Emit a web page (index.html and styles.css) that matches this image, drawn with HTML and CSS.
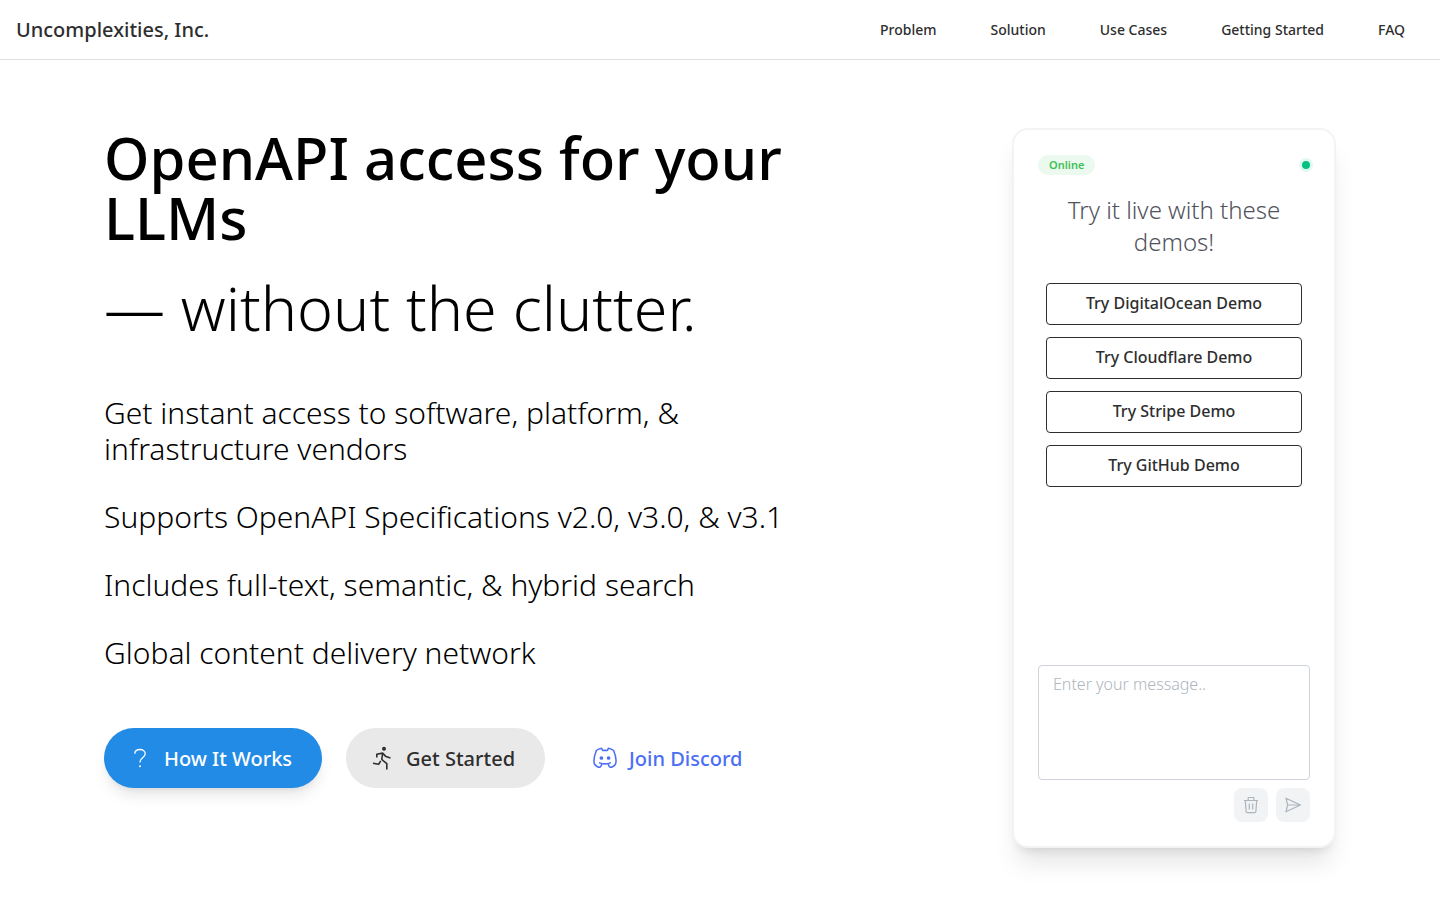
FILE: index.html
```html
<!DOCTYPE html>
<html lang="en">
<head>
<meta charset="utf-8">
<meta name="viewport" content="width=device-width, initial-scale=1">
<title>Uncomplexities, Inc.</title>
<link rel="stylesheet" href="styles.css">
</head>
<body>
<header class="site-header">
  <a class="brand" href="#">Uncomplexities, Inc.</a>
  <nav class="nav" aria-label="Main">
    <a href="#problem">Problem</a>
    <a href="#solution">Solution</a>
    <a href="#use-cases">Use Cases</a>
    <a href="#getting-started">Getting Started</a>
    <a href="#faq">FAQ</a>
  </nav>
</header>
<main class="hero">
  <section class="intro">
    <h1 class="title">OpenAPI access for your LLMs</h1>
    <p class="subtitle">— without the clutter.</p>
    <div class="features">
      <p>Get instant access to software, platform, &amp; infrastructure vendors</p>
      <p>Supports OpenAPI Specifications v2.0, v3.0, &amp; v3.1</p>
      <p>Includes full-text, semantic, &amp; hybrid search</p>
      <p>Global content delivery network</p>
    </div>
    <div class="actions">
      <a class="btn btn-primary" href="#solution">
        <svg class="icon" viewBox="0 0 24 24" aria-hidden="true"><path d="M6.800 7.800C6.800 5.200 9 3.500 12 3.500s5.200 1.800 5.200 4.300c0 3.900-5.200 4-5.200 7.900v.8"/><circle class="dot" cx="12" cy="20.200" r="1"/></svg>
        How It Works
      </a>
      <a class="btn btn-muted" href="#getting-started">
        <svg class="icon icon-run" viewBox="0 0 24 24" aria-hidden="true"><circle class="dot" cx="14" cy="2.700" r="2"/><path d="M3 17.300l5.600 1 2.100-3.400M16.800 23.500v-5.800l-5-4.200.8-6.200M6.800 11.500V8.200l5.800-1.100 3.400 3.500 4.500 1.400"/></svg>
        Get Started
      </a>
      <a class="btn btn-link" href="#discord">
        <svg class="icon icon-discord" viewBox="1 1 22 22" aria-hidden="true"><circle class="dot" cx="8.700" cy="12" r="1.700"/><circle class="dot" cx="15.300" cy="12" r="1.700"/><path d="M15 17.300c0 1 1 3.200 1.700 3.200 1.600 0 3.600-1.100 4.900-2.800 1.200-3.200.5-7.200-1.700-12.600C18.500 3.900 16.900 3.300 15.100 3l-.9 2.200a13 13 0 0 0-4.400 0L8.900 3C7.100 3.300 5.500 3.900 4.100 5.100 1.900 10.500 1.200 14.500 2.400 17.700c1.300 1.700 3.300 2.800 4.900 2.800.7 0 1.700-2.200 1.700-3.200M6.500 16.200c3.700 1.600 7.300 1.600 11 0"/></svg>
        Join Discord
      </a>
    </div>
  </section>
  <section class="card" aria-label="Live demo">
    <div class="status">
      <span class="badge">Online</span>
      <span class="status-dot"></span>
    </div>
    <h2 class="card-title">Try it live with these demos!</h2>
    <div class="demos">
      <button type="button" class="demo">Try DigitalOcean Demo</button>
      <button type="button" class="demo">Try Cloudflare Demo</button>
      <button type="button" class="demo">Try Stripe Demo</button>
      <button type="button" class="demo">Try GitHub Demo</button>
    </div>
    <form class="composer">
      <textarea class="message" aria-label="Message" placeholder="Enter your message.."></textarea>
      <div class="tools">
        <button type="button" class="tool" aria-label="Clear messages">
          <svg class="tool-icon" viewBox="0 0 18 18" aria-hidden="true"><path d="M2 4.500h14M6.200 4.500v-3h5.600v3M3.300 4.500l.8 11c.1.800.5 1.200 1.200 1.200h7.400c.7 0 1.100-.4 1.200-1.200l.8-11M7.300 7.500v6M10.700 7.500v6"/></svg>
        </button>
        <button type="button" class="tool" aria-label="Send message">
          <svg class="tool-icon" viewBox="0 0 18 18" aria-hidden="true"><path d="M1.900 2.200L16.500 9 1.900 15.800 3.700 9zM3.700 9h12.600"/></svg>
        </button>
      </div>
    </form>
  </section>
</main>
</body>
</html>
```
FILE: styles.css
```css
* { box-sizing: border-box; }

body {
  margin: 0;
  background: #fff;
  color: #000;
  font-family: "Noto Sans", "Open Sans", sans-serif;
  font-weight: 300;
}

a { color: inherit; text-decoration: none; }
h1, h2, p { margin: 0; }

svg { fill: none; stroke: currentColor; stroke-linejoin: round; }
.dot { fill: currentColor; stroke: none; }

.site-header {
  display: flex;
  align-items: center;
  justify-content: space-between;
  height: 60px;
  padding: 0 35px 1px 16px;
  border-bottom: 1px solid #dee2e6;
  color: #2e2e2e;
}
.brand { font-size: 20px; font-weight: 500; }
.nav { display: flex; gap: 54px; font-size: 14px; font-weight: 500; }

.hero {
  display: flex;
  justify-content: space-between;
  max-width: 1280px;
  margin: 0 auto;
  padding: 68px 24px 52px;
}
.intro { flex: 0 1 688px; min-width: 0; }
.title { font-size: 58px; font-weight: 500; line-height: 60px; }
.subtitle { margin-top: 30px; font-size: 61px; line-height: 60px; }
.features {
  display: flex;
  flex-direction: column;
  gap: 32px;
  margin-top: 57px;
  font-size: 30px;
  line-height: 36px;
}
.actions { display: flex; gap: 24px; margin-top: 57px; }
.btn {
  display: flex;
  align-items: center;
  gap: 12px;
  height: 60px;
  padding: 0 30px 0 24px;
  border-radius: 30px;
  font-size: 20px;
  font-weight: 500;
  white-space: nowrap;
}
.btn-primary {
  background: #228be6;
  color: #fff;
  box-shadow: 0 10px 15px -3px rgba(0, 0, 0, 0.1), 0 4px 6px -4px rgba(0, 0, 0, 0.1);
}
.btn-muted { background: #e9e9e9; color: #2e2e2e; }
.btn-link { color: #4c6ef5; }
.icon { width: 24px; height: 24px; stroke-width: 1.3; }
.icon-run { stroke-width: 1.6; }
.icon-discord { stroke-width: 1.4; }

.card {
  display: flex;
  flex: 0 0 324px;
  flex-direction: column;
  min-height: 720px;
  padding: 24px;
  border: 2px solid #f3f3f4;
  border-radius: 16px;
  background: #fff;
  box-shadow: 0 20px 25px -5px rgba(0, 0, 0, 0.1), 0 8px 10px -6px rgba(0, 0, 0, 0.1);
}
.status {
  display: flex;
  align-items: center;
  justify-content: space-between;
  min-height: 22px;
}
.badge {
  padding: 0 11px;
  border-radius: 10px;
  background: #ebf9ee;
  color: #40c057;
  font-size: 11px;
  font-weight: 600;
  line-height: 20px;
}
.status-dot {
  width: 8px;
  height: 8px;
  border-radius: 50%;
  background: #05c080;
  box-shadow: 0 0 0 3px #e2f9f0;
}
.card-title {
  margin-top: 18px;
  color: #52525b;
  font-size: 24px;
  font-weight: 300;
  line-height: 32px;
  text-align: center;
}
.demos { display: flex; flex-direction: column; gap: 12px; padding: 25px 8px; }
.demo {
  height: 42px;
  padding: 0 0 2px;
  border: 1px solid #2e2e2e;
  border-radius: 4px;
  background: #fff;
  color: #2e2e2e;
  font: 500 16px "Noto Sans", "Open Sans", sans-serif;
}
.composer { display: flex; flex-direction: column; gap: 8px; margin-top: auto; }
.message {
  display: block;
  width: 100%;
  height: 115px;
  padding: 7px 14px;
  border: 1px solid #ced4da;
  border-radius: 4px;
  background: #fff;
  font: 300 16px/22px "Noto Sans", "Open Sans", sans-serif;
  resize: none;
}
.message::placeholder { color: #adb5bd; opacity: 1; }
.tools { display: flex; justify-content: flex-end; gap: 8px; }
.tool {
  display: grid;
  place-items: center;
  width: 34px;
  height: 34px;
  padding: 0;
  border: 0;
  border-radius: 8px;
  background: #f1f3f5;
  color: #adb5bd;
}
.tool-icon { width: 18px; height: 18px; stroke-width: 1.2; }

@media (max-width: 1100px) {
  .hero { flex-direction: column; align-items: center; gap: 48px; }
  .intro { flex-basis: auto; }
  .card { flex-basis: auto; width: 324px; }
  .actions { flex-wrap: wrap; }
}
```
